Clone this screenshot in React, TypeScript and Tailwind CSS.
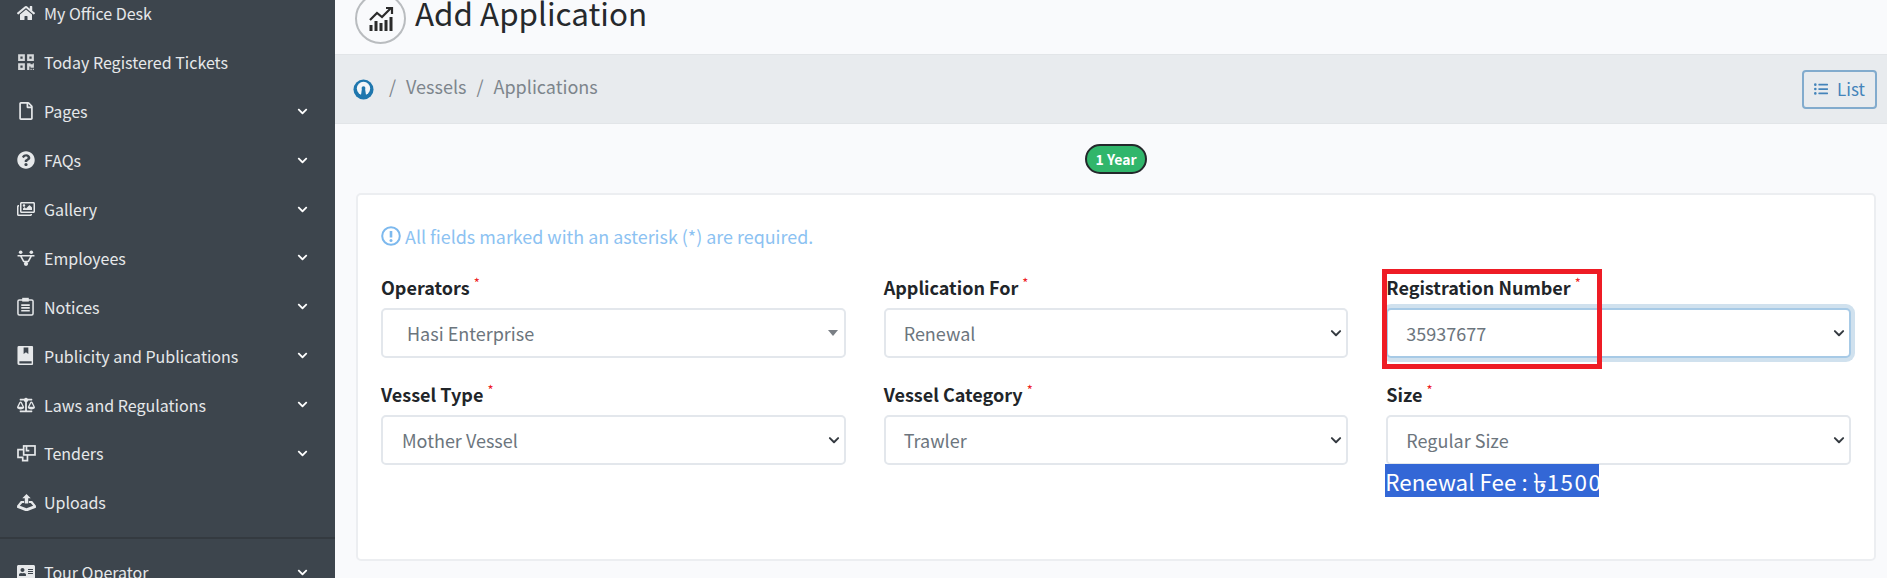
import React from "react";
import {
  FaHome, FaQrcode, FaRegFile, FaQuestionCircle, FaRegImages, FaBalanceScale, FaAddressCard, FaChevronDown, FaListUl,
} from "react-icons/fa";

const font = "font-['Noto_Sans_CJK_SC','Noto_Sans',sans-serif]";

function EmployeesIcon() {
  return (
    <svg viewBox="0 0 20 18" className="h-[16px] w-[18px]" fill="none" stroke="currentColor" strokeWidth="1.800">
      <circle cx="4" cy="2.500" r="2" fill="currentColor" stroke="none" />
      <circle cx="16" cy="2.500" r="2" fill="currentColor" stroke="none" />
      <path d="M0.500 6.500h7M12.500 6.500h7M4 6.500L7.500 13M16 6.500L12.500 13M7 13h6M7 6.500h6" />
      <circle cx="10" cy="15.500" r="2.400" fill="currentColor" stroke="none" />
    </svg>
  );
}

function NoticesIcon() {
  return (
    <svg viewBox="0 0 18 20" className="h-[19px] w-[17px]" fill="none" stroke="currentColor" strokeWidth="1.600">
      <rect x="1" y="3" width="16" height="16" rx="1.500" />
      <rect x="5.500" y="0.800" width="7" height="4" fill="currentColor" stroke="none" />
      <path d="M4.500 8.500h9M4.500 11.500h9M4.500 14.500h9" strokeWidth="1.800" />
    </svg>
  );
}

function BookIcon() {
  return (
    <svg viewBox="0 0 18 20" className="h-[19px] w-[17px]" fill="currentColor">
      <path fillRule="evenodd" d="M2 0h14a1 1 0 011 1v18a1 1 0 01-1 1H2a1.500 1.500 0 01-1.500-1.500v-17A1.500 1.500 0 012 0zM7 1.500v7l2.500-2 2.500 2v-7zM2.500 16v2.500H15.500V16z" />
    </svg>
  );
}

function TendersIcon() {
  return (
    <svg viewBox="0 0 20 18" className="h-[17px] w-[19px]" fill="none" stroke="currentColor" strokeWidth="1.800">
      <rect x="7" y="1" width="12" height="9.500" />
      <path d="M7 5H1v8h5v3.500h5V10.500" />
      <path d="M10 1v5h3" />
    </svg>
  );
}

function UploadsIcon() {
  return (
    <svg viewBox="0 0 20 18" className="h-[17px] w-[19px]" fill="currentColor">
      <path d="M10 0l4.500 4.500h-2.700v5.500H8.200V4.500H5.500z" />
      <path fillRule="evenodd" d="M4 7.500h3.500v2H5.500L3 12.500 10 15l7-2.500-2.500-3h-2v-2H16l4 5v2l-10 4-10-4v-2z" />
    </svg>
  );
}

function ChartIcon() {
  return (
    <svg viewBox="0 0 26 26" className="h-[26px] w-[26px]" fill="none" stroke="#2b2b2b">
      <path d="M3 25v-6M8 25v-10M13 25v-8M18 25v-11M23 25v-14" strokeWidth="3" />
      <path d="M2 14l7-7 5 4 9-9" strokeWidth="2.200" />
      <path d="M18 2h6v6" strokeWidth="2.200" />
    </svg>
  );
}

function KeyholeIcon() {
  return (
    <svg viewBox="0 0 22 22" className="h-[21px] w-[21px]">
      <circle cx="11" cy="11" r="10.500" fill="#1f77ae" />
      <circle cx="11" cy="10" r="7" fill="#f3f6f8" />
      <path d="M9.400 10h3.200l1.400 9H8z" fill="#1f77ae" />
      <circle cx="11" cy="9.500" r="2" fill="#1f77ae" />
    </svg>
  );
}

function InfoIcon() {
  return (
    <svg viewBox="0 0 20 20" className="h-[20px] w-[20px]" fill="none" stroke="#7db9ee" strokeWidth="2">
      <circle cx="10" cy="10" r="8.800" />
      <path d="M10 5v6.500" strokeWidth="2.600" />
      <circle cx="10" cy="14.500" r="1.500" fill="#7db9ee" stroke="none" />
    </svg>
  );
}

const navTop = [
  { label: "My Office Desk", icon: <FaHome size={18} /> },
  { label: "Today Registered Tickets", icon: <FaQrcode size={18} className="text-[#d5d8da]" /> },
  { label: "Pages", icon: <FaRegFile size={18} />, more: true },
  { label: "FAQs", icon: <FaQuestionCircle size={18} />, more: true },
  { label: "Gallery", icon: <FaRegImages size={18} />, more: true },
  { label: "Employees", icon: <EmployeesIcon />, more: true },
  { label: "Notices", icon: <NoticesIcon />, more: true },
  { label: "Publicity and Publications", icon: <BookIcon />, more: true },
  { label: "Laws and Regulations", icon: <FaBalanceScale size={18} />, more: true },
  { label: "Tenders", icon: <TendersIcon />, more: true },
  { label: "Uploads", icon: <UploadsIcon /> },
];

function NavItem({ label, icon, more }: { label: string; icon: React.ReactNode; more?: boolean }) {
  return (
    <div className="flex h-[48.9px] shrink-0 items-center pl-[17px] pr-[27px] text-[#e6e8ea]">
      <span className="flex w-[27px] shrink-0 items-center">{icon}</span>
      <span className="flex-1 text-[16px] leading-6 whitespace-nowrap">{label}</span>
      {more && <FaChevronDown size={11} className="text-white" />}
    </div>
  );
}

function Field({
  label, value, caret, focus, valuePad,
}: { label: string; value: string; caret?: boolean; focus?: boolean; valuePad?: string }) {
  return (
    <div>
      <div className="mb-2 flex h-6 items-start">
        <span className="text-[18px] leading-[22px] font-bold text-[#212529]">{label}</span>
        <span className="ml-[4px] text-[13px] leading-[14px] text-[#ee1c25]">*</span>
      </div>
      <div
        className={`flex h-[50px] items-center justify-between rounded-[5px] border-2 bg-white pr-[4px] text-[18px] text-[#6c757d] ${valuePad ?? "pl-[19px]"} ${focus ? "border-[#a7cae6] shadow-[0_0_0_4px_#d0e1ee]" : "border-[#e3e7ec]"}`}
      >
        <span>{value}</span>
        {caret ? (
          <span className="mr-[2px] h-0 w-0 border-x-[5px] border-t-[6px] border-x-transparent border-t-[#7a7f85]" />
        ) : (
          <svg viewBox="0 0 16 16" className="h-[12px] w-[12px]" fill="none" stroke="#343a40" strokeWidth="2.600" strokeLinecap="round" strokeLinejoin="round">
            <path d="M2.500 5.500L8 11l5.500-5.500" />
          </svg>
        )}
      </div>
    </div>
  );
}

export default function App() {
  return (
    <div className={`flex h-[578px] w-[1887px] overflow-hidden bg-[#f9fafc] ${font}`}>
      <aside className="flex h-[578px] w-[335px] shrink-0 flex-col overflow-hidden bg-[#3d454d]">
        <div className="-mt-[11px] flex flex-col">
          {navTop.map((n) => (
            <NavItem key={n.label} {...n} />
          ))}
        </div>
        <div className="mt-[10px] mb-[9px] h-[2px] shrink-0 bg-[#343a40]" />
        <NavItem label="Tour Operator" icon={<FaAddressCard size={18} />} more />
      </aside>

      <main className="flex min-w-0 flex-1 flex-col">
        <header className="flex h-[54px] shrink-0 items-start gap-[9px] pl-[20px]">
          <span className="-mt-[7px] flex h-[51px] w-[51px] items-center justify-center rounded-full border-2 border-[#b9bcbf]">
            <ChartIcon />
          </span>
          <h1 className="text-[31.4px] leading-[26px] font-normal text-[#26292c]">Add Application</h1>
        </header>

        <div className="flex h-[70px] shrink-0 items-center justify-between border-y border-[#e2e5e8] bg-[#e8ebee] pr-[10px] pl-[18px]">
          <div className="flex items-center text-[18px] text-[#7d858c]">
            <KeyholeIcon />
            <span className="-mt-[7px] ml-[15px] leading-6">/</span>
            <span className="-mt-[7px] ml-[10px] leading-6">Vessels</span>
            <span className="-mt-[7px] ml-[10px] leading-6">/</span>
            <span className="-mt-[7px] ml-[10px] leading-6">Applications</span>
          </div>
          <button className="flex h-[39px] w-[75px] items-center justify-center gap-[9px] rounded-[4px] border-2 border-[#82abcd] text-[17px] text-[#4484ba]">
            <FaListUl size={14} />
            List
          </button>
        </div>

        <div className="flex justify-center pt-[20px] pb-[19px] pl-[10px]">
          <span className="flex h-[30px] w-[62px] items-center justify-center rounded-full border-2 border-[#24282b] bg-[#31b66b] text-[14px] font-bold text-white">
            1 Year
          </span>
        </div>

        <section className="mr-[11px] ml-[21px] h-[368px] rounded-[5px] border-2 border-[#eceef1] bg-white pt-[29px] pr-[23px] pl-[23px]">
          <p className="flex h-6 items-center text-[17.9px] text-[#8cc2f2]">
            <InfoIcon />
            <span className="ml-[4px]">All fields marked with an asterisk (*) are required.</span>
          </p>
          <div className="mt-[28px] grid grid-cols-3 gap-x-[38px] gap-y-[25px]">
            <Field label="Operators" value="Hasi Enterprise" caret valuePad="pl-[24px]" />
            <Field label="Application For" value="Renewal" valuePad="pl-[18px]" />
            <div className="relative">
              <Field label="Registration Number" value="35937677" valuePad="pl-[18px]" focus />
              <div className="pointer-events-none absolute -top-[7px] -left-[4px] h-[100px] w-[220px] border-[5px] border-[#ee1c25]" />
            </div>
            <Field label="Vessel Type" value="Mother Vessel" />
            <Field label="Vessel Category" value="Trawler" valuePad="pl-[18px]" />
            <div>
              <Field label="Size" value="Regular Size" valuePad="pl-[18px]" />
              <span className="-mt-[1px] -ml-[1px] flex h-[33px] w-[214px] items-center bg-[#3367d6] text-[22.4px] leading-[32px] whitespace-nowrap text-white">
                Renewal Fee :&nbsp;<span className="text-[28px] leading-[28px]">৳</span>
                <span className="tracking-[1.5px]">1500</span>
              </span>
            </div>
          </div>
        </section>
      </main>
    </div>
  );
}
